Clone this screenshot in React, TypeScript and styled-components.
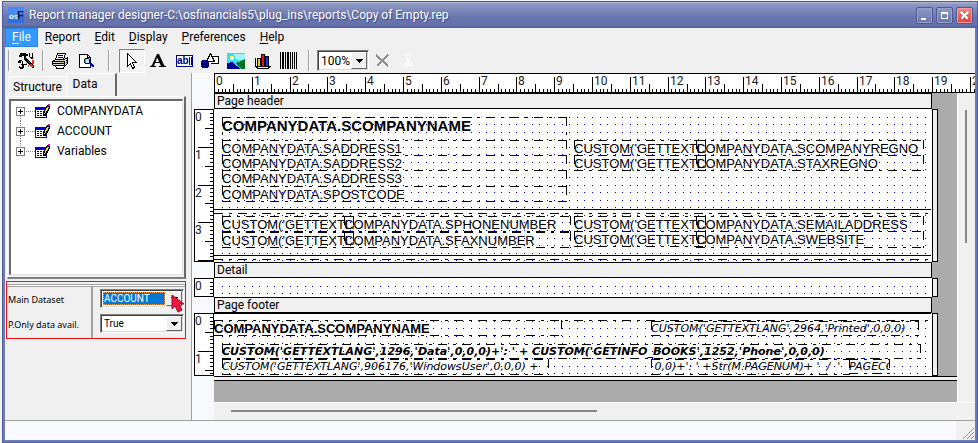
import React from "react";
import styled, { createGlobalStyle, css } from "styled-components";

const ui = `Roboto, "Noto Sans", sans-serif`;
const small = `"Noto Sans", "Open Sans", sans-serif`;
const arial = `"Liberation Sans", Arial, sans-serif`;
const verdana = `"DejaVu Sans", Verdana, sans-serif`;
const CM = 37.8;
const PAGE_WIDTH = 718;

const GlobalStyle = createGlobalStyle`
  * { box-sizing: border-box; }
  html, body, #root { height: 100%; }
  body { margin: 0; background: #f4f4ee; font-family: ${ui}; font-size: 12px; color: #000; overflow: hidden; }
  button, select { font: inherit; color: inherit; margin: 0; padding: 0; border: 0; background: none; border-radius: 0; }
  svg { display: block; flex: none; }
`;

/* ---------- window frame ---------- */

const Desktop = styled.div`
  height: 100%;
  min-height: 400px;
  padding: 1px 0 0 2px;
  display: flex;
`;

const Window = styled.main`
  flex: 1;
  min-width: 0;
  display: flex;
  flex-direction: column;
  background: #6f7bb3;
  border: 1px solid #4f5c98;
  padding: 0 2px 2px;
`;

const TitleBar = styled.header`
  flex: none;
  height: 26px;
  margin: 0 -2px;
  padding: 0 4px 0 5px;
  display: flex;
  align-items: center;
  gap: 5px;
  color: #fff;
  background: linear-gradient(#b4bbd8 0, #8f99c4 2px, #7d88b9 8px, #6874ad 16px, #6672ac 23px, #5562a0 25px);
`;

const Title = styled.h1`
  flex: 1;
  min-width: 0;
  margin: 0;
  font-size: 12px;
  line-height: 20px;
  font-weight: 400;
  white-space: nowrap;
  overflow: hidden;
  text-shadow: 1px 1px 1px #3f4a80;
`;

const CaptionButton = styled.button<{ $close?: boolean }>`
  width: 17px;
  height: 17px;
  display: grid;
  place-items: center;
  border: 1px solid #4c5893;
  border-radius: 2px;
  box-shadow: inset 0 0 0 1px ${(p) => (p.$close ? "#f5a09c" : "#97a1ca")};
  background: ${(p) => (p.$close ? "linear-gradient(#f28a84, #ee3a36)" : "linear-gradient(#8f99c4, #6874ad)")};
`;

const Captions = styled.div`
  display: flex;
  gap: 3px;
`;

const Client = styled.div`
  flex: 1;
  min-height: 0;
  display: flex;
  flex-direction: column;
  background: #f0f0f0;
`;

const MenuBar = styled.nav`
  flex: none;
  height: 20px;
  display: flex;
`;

const MenuItem = styled.button<{ $active?: boolean }>`
  height: 19px;
  padding: 0 7px;
  line-height: 17px;
  ${(p) => p.$active && css`background: #3399ff; color: #fff; border: 1px solid #2a86e2; padding: 0 6px;`}
  u { text-underline-offset: 2px; }
`;

/* ---------- toolbar ---------- */

const Toolbar = styled.div`
  flex: none;
  height: 25px;
  display: flex;
  align-items: center;
`;

const Separator = styled.span<{ $gap: number }>`
  width: 2px;
  height: 21px;
  margin: 0 ${(p) => p.$gap}px;
  border-left: 1px solid #a0a0a0;
  border-right: 1px solid #fff;
`;

const ToolButton = styled.button<{ $pressed?: boolean }>`
  width: 26px;
  height: 24px;
  display: grid;
  place-items: center;
  border: 1px solid transparent;
  ${(p) => p.$pressed && css`
    border-color: #808080 #fff #fff #808080;
    background: conic-gradient(#fff 25%, #ececec 0 50%, #fff 0 75%, #ececec 0) 0 0 / 2px 2px;
  `}
`;

const Combo = styled.span<{ $width: number; $height: number; $small?: boolean; $active?: boolean }>`
  position: relative;
  display: flex;
  width: ${(p) => p.$width}px;
  height: ${(p) => p.$height}px;
  border: 1px solid;
  border-color: #808080 #fff #fff #808080;
  box-shadow: inset 1px 1px 0 #404040, inset -1px -1px 0 #d8d8d8;
  background: #fff;
  padding: 2px;
  font-size: ${(p) => (p.$small ? 10 : 12)}px;
  select {
    flex: 1;
    min-width: 0;
    margin-right: 16px;
    padding-left: 1px;
    appearance: none;
    outline: none;
    ${(p) => p.$active && css`background: #0078d7; color: #fff; outline: 1px dotted #f0a050; outline-offset: -1px;`}
  }
`;

const ComboArrow = styled.span`
  position: absolute;
  right: 1px;
  top: 1px;
  bottom: 1px;
  width: 16px;
  display: grid;
  place-items: center;
  pointer-events: none;
  background: #f0f0f0;
  border: 1px solid;
  border-color: #fff #696969 #696969 #fff;
`;

const PointerMark = styled.svg`
  position: absolute;
  right: -2px;
  top: 4px;
`;

/* ---------- left side ---------- */

const Body = styled.div`
  flex: 1;
  min-height: 0;
  display: flex;
`;

const Side = styled.aside`
  flex: none;
  width: 187px;
  padding-right: 5px;
  display: flex;
  flex-direction: column;
  border-right: 1px solid #a0a0a0;
`;

const Tabs = styled.div`
  flex: none;
  height: 23px;
  padding-left: 3px;
  display: flex;
  align-items: flex-end;
`;

const Tab = styled.button<{ $active?: boolean }>`
  height: ${(p) => (p.$active ? 23 : 20)}px;
  width: ${(p) => (p.$active ? 51 : 58)}px;
  line-height: 20px;
  border: solid;
  border-width: 1px 0 0 1px;
  border-color: #fff;
  ${(p) => p.$active && css`border-right: 2px solid #696969; padding: 0 12px 2px 0;`}
`;

const TabPage = styled.section`
  flex: 0 1 183px;
  margin-left: 2px;
  padding: 2px 1px;
  display: flex;
  border: solid;
  border-width: 1px 2px 2px 1px;
  border-color: #fff #696969 #808080 #fff;
`;

const Tree = styled.ul`
  flex: 1;
  margin: 0;
  padding: 0 0 0 5px;
  list-style: none;
  background: #fff;
  border: solid;
  border-width: 2px 1px 1px 2px;
  border-color: #696969 #e3e3e3 #e3e3e3 #696969;
`;

const TreeItem = styled.li`
  height: 20px;
  display: flex;
  align-items: center;
  line-height: 18px;
  svg { margin-right: 6px; }
`;

const Expander = styled.button`
  width: 19px;
  height: 20px;
`;

const Properties = styled.section`
  flex: none;
  margin: 2px 0 0 1px;
  height: 58px;
  border: 1px solid #f01010;
  display: flex;
  flex-direction: column;
`;

const DoubleRule = styled.hr`
  width: 100%;
  height: 3px;
  margin: 2px 0 0;
  border: solid #a0a0a0;
  border-width: 1px 0;
  background: #fff;
`;

const PropertyGrid = styled.div`
  flex: 1;
  display: grid;
  grid-template-columns: 86px 1fr;
`;

const PropertyNames = styled.div`
  padding: 0 0 0 1px;
  border-right: 2px solid #a0a0a0;
  display: flex;
  flex-direction: column;
  justify-content: space-around;
  font-family: ${small};
  font-size: 9px;
  label { line-height: 22px; white-space: nowrap; }
`;

const PropertyValues = styled.div`
  padding: 2px 0 0 7px;
  display: flex;
  flex-direction: column;
  gap: 6px;
`;

/* ---------- designer ---------- */

const Designer = styled.section`
  flex: 1;
  min-width: 0;
  display: flex;
  flex-direction: column;
  background: linear-gradient(90deg, #f8f9fd 22px, #f0f0f0 22px);
`;

const RulerRow = styled.div`
  flex: none;
  height: 20px;
  margin-left: 22px;
  overflow: hidden;
  background: #fff;
  border: solid #000;
  border-width: 1px 0 1px 1px;
`;

const Viewport = styled.div`
  flex: 1;
  min-height: 0;
  display: flex;
`;

const Surface = styled.div`
  flex: 1;
  min-width: 0;
  overflow: hidden;
  background: linear-gradient(90deg, #f8f9fd 22px, #ababab 22px);
  border-right: 1px solid #fff;
`;

const VScroll = styled.div`
  flex: none;
  width: 17px;
  padding: 17px 0 0 7px;
  &::before { content: ""; display: block; width: 2px; height: 133px; background: #868686; }
`;

const HScroll = styled.div`
  flex: none;
  height: 18px;
  margin-left: 22px;
  padding: 7px 0 0 17px;
  border-top: 1px solid #fff;
  &::before { content: ""; display: block; width: 50%; max-width: 366px; height: 2px; background: #868686; }
`;

const BandTitle = styled.h2`
  width: ${PAGE_WIDTH}px;
  height: 16px;
  margin: 0 0 0 22px;
  padding-left: 2px;
  font-size: 12px;
  line-height: 14px;
  font-weight: 400;
  background: #f0f0f0;
  border: 1px solid #000;
`;

const BandRow = styled.div`
  display: flex;
  padding-left: 2px;
`;

const BandRuler = styled.div<{ $height: number }>`
  flex: none;
  width: 20px;
  height: ${(p) => p.$height}px;
  background: #fff;
  border: 1px solid #000;
  overflow: hidden;
`;

const BandCanvas = styled.div<{ $height: number }>`
  position: relative;
  flex: none;
  width: ${PAGE_WIDTH}px;
  height: ${(p) => p.$height}px;
  background: #fff;
  overflow: hidden;
`;

const BandHandle = styled.div`
  width: 6px;
  background: #f0f0f0;
  border: 1px solid #000;
`;

const PageEnd = styled.div`
  height: 5px;
  margin-left: 22px;
  background: #f0f0f0;
  border: solid #000;
  border-width: 1px 0;
`;

type FieldFont = "title" | "name" | "plain" | "italic" | "boldItalic";

const fieldFonts: Record<FieldFont, ReturnType<typeof css>> = {
  title: css`font: 700 15px/18px ${arial};`,
  name: css`font: 700 13px/18px ${arial};`,
  plain: css`font: 400 13px/17px ${arial};`,
  italic: css`font: italic 400 11px/15px ${verdana};`,
  boldItalic: css`font: italic 700 11px/15px ${verdana};`,
};

const FieldBox = styled.div<{ $x: number; $y: number; $w: number; $h: number; $font: FieldFont }>`
  position: absolute;
  left: ${(p) => p.$x}px;
  top: ${(p) => p.$y}px;
  width: ${(p) => p.$w}px;
  height: ${(p) => p.$h}px;
  overflow: hidden;
  white-space: pre;
  ${(p) => fieldFonts[p.$font]}
  svg { position: absolute; inset: 0; }
`;

const Grid = styled.svg`
  position: absolute;
  inset: 0;
`;

/* ---------- status bar ---------- */

const StatusBar = styled.footer`
  flex: none;
  height: 20px;
  display: flex;
  justify-content: flex-end;
  background: #f9fafe;
  border-top: 1px solid #a0a0a0;
`;

const Grip = styled.div`
  width: 19px;
  display: flex;
  align-items: flex-end;
  justify-content: flex-end;
  background: #f0f0f0;
`;

/* ---------- icons ---------- */

const Icon = ({ w = 16, h = 16, children }: { w?: number; h?: number; children: React.ReactNode }) => (
  <svg width={w} height={h} viewBox={`0 0 ${w} ${h}`} fill="none" shapeRendering="crispEdges" aria-hidden="true">
    {children}
  </svg>
);

const ArrowDown = () => (
  <ComboArrow>
    <Icon w={7} h={4}><path d="M0 0h7v1H0zM1 1h5v1H1zM2 2h3v1H2zM3 3h1v1H3z" fill="#000" /></Icon>
  </ComboArrow>
);

const AppIcon = () => (
  <svg width="16" height="16" viewBox="0 0 16 16" aria-hidden="true">
    <rect width="16" height="16" fill="#2f6fe0" />
    <path d="M0 0h16v5L0 12z" fill="#4a8bf0" />
    <text x="1" y="12" fontFamily={arial} fontSize="8" fontWeight="700" fill="#fff">os</text>
    <text x="9" y="12" fontFamily={arial} fontSize="11" fontWeight="700" fill="#101840">F</text>
  </svg>
);

const ToolsIcon = () => (
  <Icon w={17} h={17}>
    <path d="M2 1h6v1h2v2H8v2H6V4H4v1H1V3h1z" fill="#000" />
    <path d="M6 5h2l8 9v2h-2L6 7z" fill="#000" />
    <path d="M10 9h1v1h-1zM11 10h1v1h-1zM12 12h2v1h-2zM13 13h2v2h-2z" fill="#ff2020" />
    <path d="M11 1v4l2 2h2V1h-1v4h-2V1z" fill="#000" />
    <path d="M14 8h2v4h-2z" fill="#ff2020" />
    <path d="M15 3h1v4h-1z" fill="#ffe000" />
    <path d="M1 8h3v1h1v3h4v1H6v3H5v1H2v-1H1v-2h1v1h2v-2H3v-1h1V9H3v2H0V9h1z" fill="#000" />
    <path d="M10 13h1v2h-1zM8 11h1v1H8z" fill="#707070" />
  </Icon>
);

const PrinterIcon = () => (
  <Icon w={17} h={16}>
    <path d="M5.500 .5h8l-2 6h-8z" fill="#fff" stroke="#000" />
    <path d="M6 2.500h5M6 4.500h5" stroke="#000" />
    <path d="M3.500 6.500h9l3-2v6l-3 3h-9l-3-2v-3z" fill="#d8d8d8" stroke="#000" />
    <path d="M1 8.500h11M12.500 8v5M1 10.500h11M14 7.500h1M14 9.500h1" stroke="#000" />
    <path d="M3.500 12.500h9l-1 3h-7z" fill="#fff" stroke="#000" />
    <path d="M9 9h2v1H9z" fill="#e8d800" />
  </Icon>
);

const PreviewIcon = () => (
  <Icon w={17} h={16}>
    <path d="M1.500 1.500h8l3 3v10h-11z" fill="#fff" stroke="#000" />
    <path d="M9.500 1.500v3h3" stroke="#000" />
    <path d="M7 5h4v1h1v4h-1v1H7v-1H6V6h1z" fill="#000" />
    <path d="M7 6h4v4H7z" fill="#a8f0f8" />
    <path d="M7 6h1v4H7z" fill="#30b0c0" />
    <path d="M11 9h2v1h1v1h1v1h1v2h-2v-1h-1v-1h-1v-1h-1z" fill="#0000c0" />
  </Icon>
);

const CursorIcon = () => (
  <Icon w={12} h={18}>
    <path d="M1.500 1.500v13l3-3 2 5 2-1-2-5h4z" fill="#fff" stroke="#000" />
  </Icon>
);

const LetterIcon = () => (
  <svg width="16" height="14" viewBox="0 0 16 14" aria-hidden="true">
    <path d="M7 0h2l5 11q.3 1 2 1v1H9v-1h2L9.600 9H5l-1 3h2v1H0v-1q1.500 0 2-1zM7.200 3.500L5.500 8h3.600z" fill="#000" fillRule="evenodd" />
  </svg>
);

const EditIcon = () => (
  <svg width="17" height="12" viewBox="0 0 17 12" aria-hidden="true">
    <rect x="0.500" y="0.500" width="16" height="11" fill="#fff" stroke="#000080" />
    <text x="1" y="9" fontFamily={arial} fontSize="10" fontWeight="700" fill="#000080">ab</text>
    <path d="M13 2h1v8h-1zM15 2h1v8h-1z" fill="#000080" />
  </svg>
);

const ShapesIcon = () => (
  <Icon w={20} h={16}>
    <path d="M10.500 10.500h8v-7h-6" fill="#fff" stroke="#000" />
    <path d="M10.500 .5l4 8h-8z" fill="#fff" stroke="#000" />
    <circle cx="5" cy="11" r="4.500" fill="#000080" />
  </Icon>
);

const PictureIcon = () => (
  <Icon w={18} h={16}>
    <path d="M0 0h18v16H0z" fill="#30e0f0" />
    <path d="M7 1h11v6H9z" fill="#a0f4fa" />
    <circle cx="5" cy="5" r="2" fill="#fff" stroke="#ffe860" />
    <path d="M0 10l5-1 9 7H0z" fill="#000090" />
    <path d="M9 10l5-2 4-2v10h-4z" fill="#007018" />
  </Icon>
);

const ChartIcon = () => (
  <Icon w={17} h={16}>
    <path d="M1.500 5v8l2 2h11l2-2" stroke="#000" />
    <path d="M3.500 5.500h3v8h-3z" fill="#e8d000" stroke="#000" />
    <path d="M7.500 1.500h3v12h-3z" fill="#e81010" stroke="#000" />
    <path d="M11.500 3.500h3v10h-3z" fill="#2030f0" stroke="#000" />
    <path d="M10 1h1v12h-1zM6 5h1v8H6zM14 3h1v10h-1z" fill="#000" />
  </Icon>
);

const BarcodeIcon = () => (
  <Icon w={17} h={17}>
    <path d="M0 0h1v17H0zM2 0h2v17H2zM5 0h1v17H5zM7 0h2v17H7zM10 0h1v17h-1zM12 0h1v17h-1zM14 0h1v17h-1zM16 0h1v17h-1z" fill="#000" />
  </Icon>
);

const DeleteIcon = () => (
  <Icon w={15} h={14}>
    <path d="M2 2l12 11M14 2L3 13" stroke="#fff" strokeWidth="2" />
    <path d="M1 1l12 11M13 1L2 12" stroke="#909090" strokeWidth="2" />
  </Icon>
);

const CutIcon = () => (
  <Icon w={11} h={15}>
    <path d="M3 1v3l4 6M7 1v3L4 10M1.500 10.500h3v3h-3zM6.500 9.500h3v3h-3z" stroke="#fff" strokeWidth="1" />
  </Icon>
);

const DatasetIcon = () => (
  <Icon w={16} h={15}>
    <path d="M0 3h12v11H0z" fill="#0000e0" />
    <path d="M1 6h10v7H1z" fill="#fff" />
    <path d="M2 7h2v1H2zM5 7h2v1H5zM8 7h2v1H8zM2 9h2v1H2zM5 9h2v1H5zM8 9h2v1H8zM2 11h2v1H2zM5 11h2v1H5zM8 11h2v1H8z" fill="#000" />
    <path d="M12 1h3v3l-4 8H8V9z" fill="#000" />
    <path d="M12 3h2l-4 7H9z" fill="#f0e020" />
    <path d="M13 0h2v2h-2z" fill="#e010c0" />
  </Icon>
);

const PlusBox = ({ up, down }: { up: boolean; down: boolean }) => (
  <Icon w={19} h={20}>
    <path d={`M10 10.500h9${up ? "M4.500 0v6" : ""}${down ? "M4.500 15v5" : ""}`} stroke="#808080" strokeDasharray="1 1" />
    <path d="M.5 6.500h8v8h-8z" fill="#fff" stroke="#808080" />
    <path d="M2 10h5v1H2zM4 8h1v5H4z" fill="#000" />
  </Icon>
);

/* ---------- rulers, grid and fields ---------- */

const tickLength = (i: number) => (i % 10 === 0 ? 15 : i % 5 === 0 ? 8 : 3);

const HorizontalRuler = () => {
  const ticks = Array.from({ length: 260 }, (_, i) => {
    const l = tickLength(i);
    return `M${Math.round((i * CM) / 10) - 1} ${18 - l}h1v${l}h-1z`;
  });
  return (
    <svg width={26 * CM} height="18" shapeRendering="crispEdges" aria-hidden="true">
      <path d={ticks.join("")} fill="#000" />
      {Array.from({ length: 26 }, (_, i) => (
        <text key={i} x={Math.round(i * CM) + 1} y="11" fontFamily={ui} fontSize="12" fill="#202020">{i}</text>
      ))}
    </svg>
  );
};

const VerticalRuler = ({ height }: { height: number }) => {
  const count = Math.floor(((height - 1) * 10) / CM);
  const ticks = Array.from({ length: count }, (_, i) => {
    const l = tickLength(i + 1);
    return `M${18 - l} ${Math.round(((i + 1) * CM) / 10) - 1}h${l}v1h-${l}z`;
  });
  return (
    <svg width="18" height={height} shapeRendering="crispEdges" aria-hidden="true">
      <path d={ticks.join("")} fill="#000" />
      {Array.from({ length: Math.ceil(height / CM) }, (_, i) => (
        <text key={i} x="0" y={Math.round(i * CM) + 11} fontFamily={ui} fontSize="12" fill="#202020">{i}</text>
      ))}
    </svg>
  );
};

const DotGrid = ({ height }: { height: number }) => {
  const step = CM / 5;
  let d = "";
  for (let y = step; y < height - 1; y += step)
    for (let x = step; x < PAGE_WIDTH - 1; x += step) d += `M${Math.round(x)} ${Math.round(y)}h1v1h-1z`;
  return (
    <Grid width={PAGE_WIDTH} height={height} shapeRendering="crispEdges" aria-hidden="true">
      <path d={d} fill="#0000ff" />
    </Grid>
  );
};

interface FieldData { x: number; y: number; w: number; h: number; font?: FieldFont; text?: string; line?: boolean }

const Field = ({ x, y, w, h, font = "plain", text, line }: FieldData) => (
  <FieldBox $x={x} $y={y} $w={w} $h={h} $font={font}>
    {text}
    <svg width={w} height={h} fill="none" stroke="#000" shapeRendering="crispEdges" aria-hidden="true">
      {line
        ? <path d={`M0 .5h${w}`} />
        : <path d={`M0 .5h${w}M.5 0v${h}M${w - 1}.5 0v${h}`} strokeDasharray="9 6 3 6" />}
      <path d={`M0 ${h - 1}.5h${w}`} strokeDasharray="9 6 3 6" />
    </svg>
  </FieldBox>
);

interface BandData { title: string; height: number; fields: FieldData[] }

const getText = "CUSTOM('GETTEXTLANG',";

const bands: BandData[] = [
  {
    title: "Page header",
    height: 153,
    fields: [
      { x: 8, y: 8, w: 345, h: 24, font: "title", text: "COMPANYDATA.SCOMPANYNAME" },
      { x: 8, y: 31, w: 345, h: 16, text: "COMPANYDATA.SADDRESS1" },
      { x: 8, y: 46, w: 345, h: 16, text: "COMPANYDATA.SADDRESS2" },
      { x: 8, y: 61, w: 345, h: 17, text: "COMPANYDATA.SADDRESS3" },
      { x: 8, y: 77, w: 345, h: 16, text: "COMPANYDATA.SPOSTCODE" },
      { x: 360, y: 31, w: 132, h: 16, text: getText },
      { x: 360, y: 46, w: 132, h: 16, text: getText },
      { x: 482, y: 31, w: 228, h: 16, text: "COMPANYDATA.SCOMPANYREGNO" },
      { x: 482, y: 46, w: 228, h: 16, text: "COMPANYDATA.STAXREGNO" },
      { x: 0, y: 100, w: 717, h: 5, line: true },
      { x: 8, y: 107, w: 132, h: 16, text: getText },
      { x: 8, y: 123, w: 132, h: 16, text: getText },
      { x: 130, y: 107, w: 227, h: 16, text: "COMPANYDATA.SPHONENUMBER" },
      { x: 130, y: 123, w: 227, h: 16, text: "COMPANYDATA.SFAXNUMBER" },
      { x: 360, y: 107, w: 132, h: 16, text: getText },
      { x: 360, y: 122, w: 132, h: 16, text: getText },
      { x: 482, y: 107, w: 228, h: 16, text: "COMPANYDATA.SEMAILADDRESS" },
      { x: 482, y: 122, w: 228, h: 17, text: "COMPANYDATA.SWEBSITE" },
      { x: 0, y: 146, w: 717, h: 5, line: true },
    ],
  },
  { title: "Detail", height: 19, fields: [] },
  {
    title: "Page footer",
    height: 63,
    fields: [
      { x: 0, y: 0, w: 717, h: 8, line: true },
      { x: 0, y: 7, w: 348, h: 16, font: "name", text: "COMPANYDATA.SCOMPANYNAME" },
      { x: 437, y: 8, w: 268, h: 15, font: "italic", text: "CUSTOM('GETTEXTLANG',2964,'Printed',0,0,0)" },
      { x: 8, y: 31, w: 699, h: 15, font: "boldItalic", text: "CUSTOM('GETTEXTLANG',1296,'Data',0,0,0)+': ' + CUSTOM('GETINFO_BOOKS',1252,'Phone',0,0,0)" },
      { x: 8, y: 46, w: 327, h: 16, font: "italic", text: "CUSTOM('GETTEXTLANG',906176,'WindowsUser',0,0,0) +" },
      { x: 437, y: 46, w: 199, h: 16, font: "italic", text: " 0,0)+': ' +Str(M.PAGENUM)+ '  /  '" },
      { x: 635, y: 46, w: 41, h: 15, font: "italic", text: "PAGECOUNT" },
    ],
  },
];

const Band = ({ title, height, fields }: BandData) => (
  <>
    <BandTitle>{title}</BandTitle>
    <BandRow>
      <BandRuler $height={height}><VerticalRuler height={height} /></BandRuler>
      <BandCanvas $height={height}>
        <DotGrid height={height} />
        {fields.map((f, i) => <Field key={i} {...f} />)}
      </BandCanvas>
      <BandHandle />
    </BandRow>
  </>
);

const menus = ["File", "Report", "Edit", "Display", "Preferences", "Help"];
const datasets = ["COMPANYDATA", "ACCOUNT", "Variables"];

export default function App() {
  return (
    <Desktop>
      <GlobalStyle />
      <Window>
        <TitleBar>
          <AppIcon />
          <Title>Report manager designer-C:\osfinancials5\plug_ins\reports\Copy of Empty.rep</Title>
          <Captions>
            <CaptionButton aria-label="Minimize"><Icon w={9} h={9}><path d="M1 7h5v2H1z" fill="#fff" /></Icon></CaptionButton>
            <CaptionButton aria-label="Maximize"><Icon w={9} h={9}><path d="M1 1h7v7H1zM2 3v4h5V3z" fill="#fff" fillRule="evenodd" /></Icon></CaptionButton>
            <CaptionButton $close aria-label="Close"><Icon w={9} h={9}><path d="M1 1l7 7M8 1L1 8" stroke="#fff" strokeWidth="2" /></Icon></CaptionButton>
          </Captions>
        </TitleBar>
        <Client>
          <MenuBar>
            {menus.map((m, i) => (
              <MenuItem key={m} $active={i === 0}><u>{m[0]}</u>{m.slice(1)}</MenuItem>
            ))}
          </MenuBar>
          <Toolbar>
            <Separator $gap={3} />
            <ToolButton aria-label="Configuration"><ToolsIcon /></ToolButton>
            <Separator $gap={3} />
            <ToolButton aria-label="Print"><PrinterIcon /></ToolButton>
            <ToolButton aria-label="Preview"><PreviewIcon /></ToolButton>
            <Separator $gap={9} />
            <ToolButton $pressed aria-label="Select"><CursorIcon /></ToolButton>
            <ToolButton aria-label="Label"><LetterIcon /></ToolButton>
            <ToolButton aria-label="Expression"><EditIcon /></ToolButton>
            <ToolButton aria-label="Shape"><ShapesIcon /></ToolButton>
            <ToolButton aria-label="Image"><PictureIcon /></ToolButton>
            <ToolButton aria-label="Chart"><ChartIcon /></ToolButton>
            <ToolButton aria-label="Barcode"><BarcodeIcon /></ToolButton>
            <Separator $gap={7} />
            <Combo $width={52} $height={21}>
              <select aria-label="Zoom" defaultValue="100%"><option>100%</option></select>
              <ArrowDown />
            </Combo>
            <ToolButton aria-label="Delete"><DeleteIcon /></ToolButton>
            <ToolButton aria-label="Cut"><CutIcon /></ToolButton>
          </Toolbar>
          <Body>
            <Side>
              <Tabs role="tablist">
                <Tab role="tab" aria-selected="false">Structure</Tab>
                <Tab role="tab" aria-selected="true" $active>Data</Tab>
              </Tabs>
              <TabPage>
                <Tree>
                  {datasets.map((d, i) => (
                    <TreeItem key={d}>
                      <Expander aria-label={`Expand ${d}`}><PlusBox up={i > 0} down={i < datasets.length - 1} /></Expander>
                      <DatasetIcon />
                      {d}
                    </TreeItem>
                  ))}
                </Tree>
              </TabPage>
              <Properties>
                <DoubleRule />
                <PropertyGrid>
                  <PropertyNames>
                    <label htmlFor="main-dataset">Main Dataset</label>
                    <label htmlFor="print-only">P.Only data avail.</label>
                  </PropertyNames>
                  <PropertyValues>
                    <Combo $width={84} $height={19} $small $active>
                      <select id="main-dataset" defaultValue="ACCOUNT"><option>ACCOUNT</option><option>COMPANYDATA</option></select>
                      <ArrowDown />
                      <PointerMark width="14" height="19" viewBox="0 0 14 19" aria-hidden="true">
                        <path d="M1 1v14l3-3 3 6 4-2-3-6h5z" fill="#f01440" stroke="#a00828" strokeWidth="1" />
                      </PointerMark>
                    </Combo>
                    <Combo $width={84} $height={19} $small>
                      <select id="print-only" defaultValue="True"><option>True</option><option>False</option></select>
                      <ArrowDown />
                    </Combo>
                  </PropertyValues>
                </PropertyGrid>
              </Properties>
            </Side>
            <Designer>
              <RulerRow><HorizontalRuler /></RulerRow>
              <Viewport>
                <Surface>
                  {bands.map((b) => <Band key={b.title} {...b} />)}
                  <PageEnd />
                </Surface>
                <VScroll />
              </Viewport>
              <HScroll />
            </Designer>
          </Body>
          <StatusBar>
            <Grip>
              <Icon w={13} h={13}>
                <path d="M1 12L12 1M5 12l7-7M9 12l3-3" stroke="#909090" strokeWidth="1" />
              </Icon>
            </Grip>
          </StatusBar>
        </Client>
      </Window>
    </Desktop>
  );
}
